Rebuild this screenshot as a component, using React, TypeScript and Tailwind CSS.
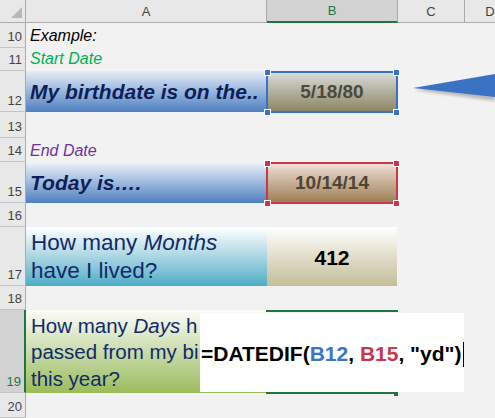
import React from 'react';

interface RowProps {
    n: number;
    h: string;
    active?: boolean;
    className?: string;
    children?: React.ReactNode;
}

function Row({ n, h, active, className = '', children }: RowProps) {
    return (
        <div className={`flex ${h} ${className}`}>
            <div
                className={`w-[26px] shrink-0 flex items-end justify-end pr-[3px] pb-[2px] text-[13px] leading-[16px] border-b border-b-[#c4c4c4] ${
                    active
                        ? 'bg-[#d2d2d2] text-[#217346] border-r-2 border-r-[#217346]'
                        : 'bg-[#e8e8e8] text-[#444] border-r border-r-[#ababab]'
                }`}
            >
                {n}
            </div>
            {children}
        </div>
    );
}

function Handle({ pos, fill }: { pos: string; fill: string }) {
    return <div className={`absolute w-[7px] h-[7px] border border-white ${fill} ${pos}`} />;
}

function Selection({ tone }: { tone: 'blue' | 'red' }) {
    const line = tone === 'blue' ? 'border-[#3a70c8]' : 'border-[#c8374a]';
    const fill = tone === 'blue' ? 'bg-[#3a70c8]' : 'bg-[#c8374a]';
    return (
        <>
            <div className={`absolute -left-px -right-px top-0 -bottom-px border-2 ${line}`} />
            <Handle fill={fill} pos="-left-[3px] -top-[2px]" />
            <Handle fill={fill} pos="-right-[3px] -top-[2px]" />
            <Handle fill={fill} pos="-left-[3px] -bottom-[4px]" />
            <Handle fill={fill} pos="-right-[3px] -bottom-[4px]" />
        </>
    );
}

export default function App() {
    return (
        <div className="relative w-[495px] h-[418px] overflow-hidden bg-[#f2f2f2] font-['Liberation_Sans',Arial,sans-serif] text-black">
            {/* Column headers */}
            <div className="flex h-[23px] text-[13px] text-[#444]">
                <div className="relative w-[26px] shrink-0 bg-[#e8e8e8] border-r border-b border-[#ababab]">
                    <svg className="absolute left-[10px] top-[7px]" width="13" height="12">
                        <polygon points="12,0 12,11 1,11" fill="#b7b7b7" />
                    </svg>
                </div>
                <div className="w-[241px] shrink-0 flex items-center justify-center pt-px bg-[#e8e8e8] border-r border-b border-[#ababab]">
                    A
                </div>
                <div className="w-[131px] shrink-0 flex items-center justify-center pt-px bg-[#d2d2d2] border-r border-r-[#ababab] border-b-2 border-b-[#217346] text-[#217346]">
                    B
                </div>
                <div className="w-[67px] shrink-0 flex items-center justify-center pt-px bg-[#e8e8e8] border-r border-b border-[#ababab]">
                    C
                </div>
                <div className="w-[50px] shrink-0 flex items-center justify-center pt-px bg-[#e8e8e8] border-b border-[#ababab]">
                    D
                </div>
            </div>

            {/* Row 10 */}
            <Row n={10} h="h-[25px]">
                <div className="w-[241px] shrink-0 flex items-end pl-[4px] pb-[3px] text-[16px] leading-[18px] italic">
                    Example:
                </div>
            </Row>

            {/* Row 11 */}
            <Row n={11} h="h-[23px]">
                <div className="w-[241px] shrink-0 flex items-end pl-[4px] pb-[3px] text-[16px] leading-[18px] italic text-[#00b050]">
                    Start Date
                </div>
            </Row>

            {/* Row 12 */}
            <Row n={12} h="h-[41px]">
                <div className="w-[241px] shrink-0 flex items-center pl-[4px] bg-linear-to-b from-[#e6edf7] to-[#4f7fc0] text-[21px] leading-[24px] font-bold italic text-[#0c1f5a] whitespace-nowrap overflow-hidden">
                    My birthdate is on the..
                </div>
                <div className="relative w-[130px] shrink-0 flex items-center justify-center bg-linear-to-b from-[#dedede] to-[#8a8560] text-[19px] leading-[24px] font-bold text-[#4a4a3e]">
                    5/18/80
                    <Selection tone="blue" />
                </div>
            </Row>

            {/* Row 13 */}
            <Row n={13} h="h-[26px]" />

            {/* Row 14 */}
            <Row n={14} h="h-[24px]">
                <div className="w-[241px] shrink-0 flex items-end pl-[4px] pb-[2px] text-[16px] leading-[18px] italic text-[#7030a0]">
                    End Date
                </div>
            </Row>

            {/* Row 15 */}
            <Row n={15} h="h-[41px]">
                <div className="w-[241px] shrink-0 flex items-center pl-[4px] bg-linear-to-b from-[#eef3fa] to-[#4f7fc0] text-[21px] leading-[24px] font-bold italic text-[#0c1f5a] whitespace-nowrap">
                    Today is….
                </div>
                <div className="relative w-[130px] shrink-0 flex items-center justify-center bg-linear-to-b from-[#f4e2de] to-[#9a7f52] text-[19px] leading-[24px] font-bold text-[#4f4436]">
                    10/14/14
                    <Selection tone="red" />
                </div>
            </Row>

            {/* Row 16 */}
            <Row n={16} h="h-[24px]" />

            {/* Row 17 */}
            <Row n={17} h="h-[59px]">
                <div className="w-[241px] shrink-0 flex flex-col justify-end pl-[5px] pb-px bg-linear-to-b from-white to-[#4bacc6] text-[22.5px] leading-[28px] text-[#12296b] whitespace-nowrap">
                    <span>
                        How many <i>Months</i>
                    </span>
                    <span>have I lived?</span>
                </div>
                <div className="w-[130px] shrink-0 flex items-center justify-center bg-linear-to-b from-white to-[#c4bd97] text-[21px] leading-[24px] font-bold pt-[3px]">
                    412
                </div>
            </Row>

            {/* Row 18 */}
            <Row n={18} h="h-[24px]" />

            {/* Row 19 */}
            <Row n={19} h="h-[83px]" active className="relative">
                <div className="w-[241px] shrink-0 bg-linear-to-b from-[#fbfcf7] to-[#9bbb59]">
                    <div className="w-[174px] h-full flex flex-col justify-end pl-[5px] pb-px text-[20.5px] leading-[26.5px] text-[#12296b] whitespace-nowrap">
                        <span>
                            How many <i>Days</i> h
                        </span>
                        <span>passed from my bi</span>
                        <span>this year?</span>
                    </div>
                </div>
                {/* B19 selection outline */}
                <div className="absolute left-[266px] top-0 w-[132px] h-[2px] bg-[#217346]" />
                <div className="absolute left-[266px] top-[82px] w-[128px] h-[2px] bg-[#217346]" />
                <div className="absolute left-[394px] top-[82px] w-[4px] h-[4px] bg-[#217346]" />
                {/* in-cell editor */}
                <div className="absolute left-[200px] top-[3px] w-[264px] h-[79px] bg-white flex items-center pt-[3px] pl-px text-[21px] leading-[24px] font-bold whitespace-nowrap">
                    <span>
                        =DATEDIF(<span className="text-[#3a75c8]">B12</span>,{' '}
                        <span className="text-[#c8374a]">B15</span>, "yd")
                    </span>
                    <span className="inline-block w-px h-[25px] bg-black ml-px" />
                </div>
            </Row>

            {/* Row 20 */}
            <Row n={20} h="h-[25px]" />

            {/* callout arrow */}
            <svg className="absolute left-[400px] top-[65px]" width="95" height="40">
                <defs>
                    <filter id="sh" x="-20%" y="-50%" width="140%" height="200%">
                        <feGaussianBlur stdDeviation="1.4" />
                    </filter>
                </defs>
                <polygon points="14,25 95,12 95,36" fill="#8a8a8a" opacity="0.55" filter="url(#sh)" />
                <polygon points="13,23 95,9 95,32" fill="#3b73c3" />
            </svg>
        </div>
    );
}
